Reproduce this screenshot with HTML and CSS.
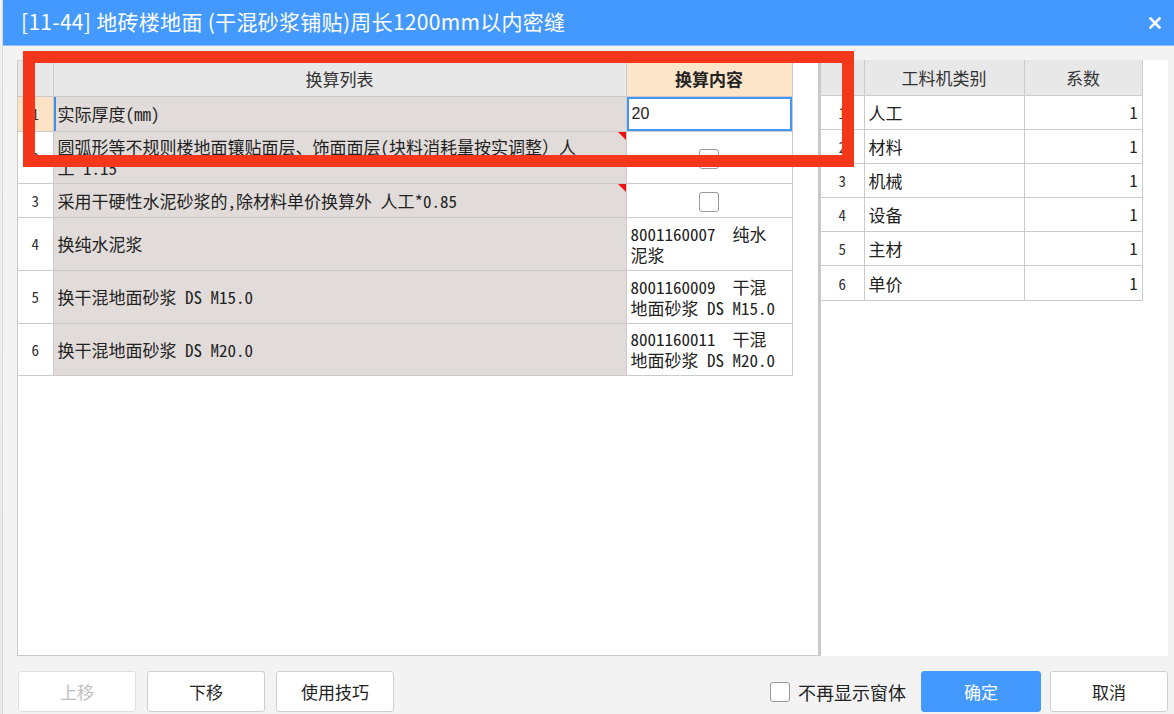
FILE: index.html
```html
<!DOCTYPE html>
<html lang="zh-CN">
<head>
<meta charset="utf-8">
<title>换算</title>
<link rel="stylesheet" href="styles.css">
</head>
<body>
<div class="app">
  <div class="edge"></div>
  <div class="dialog">
    <div class="titlebar">
      <span class="title">[11-44] 地砖楼地面 (干混砂浆铺贴)周长1200mm以内密缝</span>
      <svg class="close" width="12" height="12" viewBox="0 0 12 12"><path d="M1.5 1.5 L10.5 10.5 M10.5 1.5 L1.5 10.5" stroke="#fff" stroke-width="2.6" stroke-linecap="square"/></svg>
    </div>
    <div class="body">
      <div class="panels">
        <div class="panel panel-left">
          <table class="grid grid-left">
            <colgroup><col class="c-num"><col class="c-name"><col class="c-val"></colgroup>
            <tr class="head">
              <th class="num"></th>
              <th>换算列表</th>
              <th class="hl">换算内容</th>
            </tr>
            <tr class="r1">
              <td class="num sel">1</td>
              <td class="name cur">实际厚度(mm)</td>
              <td class="val edit"><span class="input">20</span></td>
            </tr>
            <tr class="r2">
              <td class="num">2</td>
              <td class="name mark">圆弧形等不规则楼地面镶贴面层、饰面面层(块料消耗量按实调整）人<br>工*1.15</td>
              <td class="val center"><span class="cb"></span></td>
            </tr>
            <tr class="r1">
              <td class="num">3</td>
              <td class="name mark">采用干硬性水泥砂浆的,除材料单价换算外 人工*0.85</td>
              <td class="val center"><span class="cb"></span></td>
            </tr>
            <tr class="r3">
              <td class="num">4</td>
              <td class="name">换纯水泥浆</td>
              <td class="val">8001160007&nbsp; 纯水<br>泥浆</td>
            </tr>
            <tr class="r3">
              <td class="num">5</td>
              <td class="name">换干混地面砂浆 DS M15.0</td>
              <td class="val">8001160009&nbsp; 干混<br>地面砂浆 DS M15.0</td>
            </tr>
            <tr class="r2">
              <td class="num">6</td>
              <td class="name">换干混地面砂浆 DS M20.0</td>
              <td class="val">8001160011&nbsp; 干混<br>地面砂浆 DS M20.0</td>
            </tr>
          </table>
        </div>
        <div class="panel panel-right">
          <table class="grid grid-right">
            <colgroup><col class="d-num"><col class="d-name"><col class="d-val"></colgroup>
            <tr class="head">
              <th class="num"></th>
              <th>工料机类别</th>
              <th>系数</th>
            </tr>
            <tr><td class="num">1</td><td class="name2">人工</td><td class="coef">1</td></tr>
            <tr><td class="num">2</td><td class="name2">材料</td><td class="coef">1</td></tr>
            <tr><td class="num">3</td><td class="name2">机械</td><td class="coef">1</td></tr>
            <tr><td class="num">4</td><td class="name2">设备</td><td class="coef">1</td></tr>
            <tr><td class="num">5</td><td class="name2">主材</td><td class="coef">1</td></tr>
            <tr><td class="num">6</td><td class="name2">单价</td><td class="coef">1</td></tr>
          </table>
        </div>
      </div>
      <div class="footer">
        <div class="btns">
          <span class="btn disabled">上移</span>
          <span class="btn">下移</span>
          <span class="btn">使用技巧</span>
        </div>
        <div class="actions">
          <label class="check"><span class="cb cb-foot"></span><span>不再显示窗体</span></label>
          <span class="btn primary">确定</span>
          <span class="btn">取消</span>
        </div>
      </div>
    </div>
  </div>
  <div class="redbox"></div>
</div>
</body>
</html>
```

FILE: styles.css
```css
html, body {
  margin: 0;
  padding: 0;
}
body {
  width: 1174px;
  height: 714px;
  overflow: hidden;
  background: #f3f3f3;
  font-family: "Noto Sans CJK SC", "Noto Sans", sans-serif;
  color: #222;
}
.app {
  position: relative;
  display: flex;
  width: 1174px;
  height: 714px;
}
.edge {
  width: 3px;
  flex: none;
  background: linear-gradient(#f2f2f2, #e9e9e9);
  border-right: 1px solid #d8d8d8;
  box-sizing: border-box;
}
.dialog {
  flex: 1;
  display: flex;
  flex-direction: column;
  background: #f3f3f3;
}
.titlebar {
  height: 45px;
  background: #4499fe;
  border-bottom: 1px solid #8fc0fb;
  display: flex;
  align-items: center;
  justify-content: space-between;
  padding: 0 13px 0 18px;
  flex: none;
}
.title {
  color: #fff;
  font-size: 21px;
  letter-spacing: 0.3px;
  line-height: 1;
  padding-bottom: 2px;
}
.close {
  display: block;
  margin-top: 1px;
}
.body {
  flex: 1;
  display: flex;
  flex-direction: column;
  padding: 14px 6px 0 14px;
}
.panels {
  display: flex;
  height: 596px;
}
.panel {
  background: #fff;
  box-sizing: border-box;
}
.panel-left {
  width: 802px;
  border: 1px solid #c9c9c9;
  border-top: 1px solid #d4d4d4;
}
.panel-right {
  width: 349px;
  border-left: 2px solid #c9c9c9;
}
.grid {
  border-collapse: collapse;
  table-layout: fixed;
  font-family: "Noto Sans Mono CJK SC", "Noto Sans CJK SC", monospace;
  font-size: 17px;
  color: #222;
}
.grid td, .grid th {
  border: 1px solid #cbcbcb;
  padding: 0 4px;
  box-sizing: border-box;
  line-height: 21px;
}
.grid th {
  background: #e8e8e8;
  font-weight: normal;
  font-family: "Noto Sans CJK SC", sans-serif;
  font-size: 17px;
  color: #333;
  border-top: none;
  height: 35px;
}
.grid tr > :first-child { border-left: none; }
.grid-left { width: 774px; }
.c-num { width: 35px; }
.c-name { width: 573px; }
.c-val { width: 166px; }
.grid th.hl {
  background: #fde5c9;
  font-weight: bold;
  color: #222;
}
.grid td.num {
  text-align: center;
  background: #fff;
  color: #333;
  font-size: 15px;
  padding: 0;
}
.grid td.num.sel { background: #fde3c6; }
.grid td.name {
  background: #e1dcda;
  position: relative;
}
.grid td.name.cur {
  box-shadow: inset 2px 0 0 #3f8fea;
}
.grid td.name.mark::after {
  content: "";
  position: absolute;
  top: 0;
  right: 0;
  border-top: 8px solid #ee1111;
  border-left: 8px solid transparent;
}
.grid tr.r1 td { height: 34px; }
.grid tr.r2 td { height: 52px; }
.grid tr.r3 td { height: 53px; }
.grid td.val {
  background: #fff;
  font-size: 17px;
}
.grid td.val.center { text-align: center; }
.grid td.edit {
  padding: 0;
  position: relative;
}
.input {
  display: flex;
  align-items: center;
  height: 34px;
  box-sizing: border-box;
  border: 2px solid #4597f3;
  padding-left: 3px;
  font-family: "Liberation Sans", Arial, sans-serif;
  font-size: 16px;
  color: #222;
}
.cb {
  display: inline-block;
  width: 20px;
  height: 20px;
  box-sizing: border-box;
  border: 1px solid #9a9a9a;
  border-radius: 3px;
  background: #fff;
  vertical-align: middle;
}
.grid-right { width: 321px; }
.d-num { width: 43px; }
.d-name { width: 160px; }
.d-val { width: 118px; }
.grid-right td { height: 34.2px; background: #fff; }
.grid-right th { height: 35px; }
.grid-right td.num { font-size: 15px; }
.grid-right td.name2 { font-size: 17px; }
.grid-right td.coef { text-align: right; font-size: 16px; }
.footer {
  display: flex;
  justify-content: space-between;
  align-items: flex-start;
  padding-top: 15px;
  padding-left: 1px;
}
.btns, .actions {
  display: flex;
  align-items: center;
  gap: 11px;
}
.actions { gap: 9px; }
.btn {
  display: flex;
  align-items: center;
  justify-content: center;
  width: 118px;
  height: 41px;
  box-sizing: border-box;
  border: 1px solid #cfcfcf;
  border-radius: 3px;
  background: #fff;
  font-size: 17px;
  color: #222;
}
.btn.disabled { color: #bdbdbd; border-color: #e0e0e0; }
.btn.primary {
  background: #4499fe;
  border-color: #4499fe;
  color: #fff;
  width: 120px;
}
.check {
  display: flex;
  align-items: center;
  gap: 8px;
  font-size: 18px;
  color: #222;
  margin-right: 6px;
}
.cb-foot { border-color: #999; }
.redbox {
  position: absolute;
  left: 23px;
  top: 51px;
  width: 831px;
  height: 116px;
  box-sizing: border-box;
  border: 12px solid #f4361a;
  pointer-events: none;
}
```
